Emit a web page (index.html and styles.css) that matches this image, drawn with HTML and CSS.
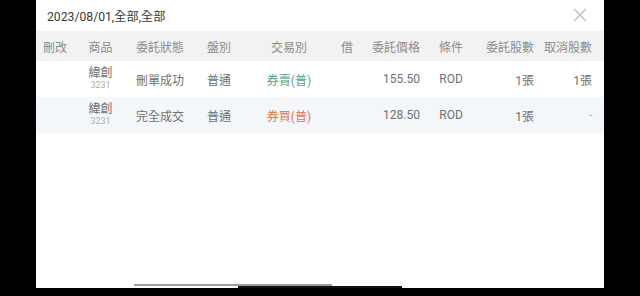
FILE: index.html
```html
<!DOCTYPE html>
<html lang="zh-Hant">
<head>
<meta charset="utf-8">
<link rel="stylesheet" href="styles.css">
</head>
<body>
<div class="panel">
  <div class="titlebar">
    <span class="title">2023/08/01,全部,全部</span>
    <svg class="close" width="14" height="14" viewBox="0 0 14 14"><path d="M1 1L13 13M13 1L1 13" stroke="#c4c4c4" stroke-width="1.6" fill="none"/></svg>
  </div>
  <div class="table">
    <div class="row head">
      <div class="c">刪改</div>
      <div class="c">商品</div>
      <div class="c">委託狀態</div>
      <div class="c">盤別</div>
      <div class="c">交易別</div>
      <div class="c">借</div>
      <div class="r">委託價格</div>
      <div class="c">條件</div>
      <div class="r">委託股數</div>
      <div class="r">取消股數</div>
    </div>
    <div class="row body">
      <div class="c"></div>
      <div class="c stock"><span class="name">緯創</span><span class="code">3231</span></div>
      <div class="c">刪單成功</div>
      <div class="c">普通</div>
      <div class="c sell">券賣(普)</div>
      <div class="c"></div>
      <div class="r">155.50</div>
      <div class="c">ROD</div>
      <div class="r">1張</div>
      <div class="r">1張</div>
    </div>
    <div class="row body alt">
      <div class="c"></div>
      <div class="c stock"><span class="name">緯創</span><span class="code">3231</span></div>
      <div class="c">完全成交</div>
      <div class="c">普通</div>
      <div class="c buy">券買(普)</div>
      <div class="c"></div>
      <div class="r">128.50</div>
      <div class="c">ROD</div>
      <div class="r">1張</div>
      <div class="r dash">-</div>
    </div>
  </div>
  <div class="scroll-thumb"></div>
  <div class="nav-bar"></div>
</div>
</body>
</html>
```

FILE: styles.css
```css
html, body {
  margin: 0;
  padding: 0;
  background: #000;
  width: 640px;
  height: 296px;
  overflow: hidden;
  font-family: "Roboto", "Noto Sans CJK TC", sans-serif;
}
.panel {
  position: relative;
  margin-left: 36px;
  width: 568px;
  height: 288px;
  background: #fff;
}
.titlebar {
  height: 31px;
  display: flex;
  align-items: center;
  justify-content: space-between;
  padding: 0 17px 0 11px;
}
.title {
  font-size: 12.2px;
  color: #3a3a3a;
  padding-top: 1px;
}
.close {
  display: block;
  margin-top: -2px;
}
.row {
  display: grid;
  grid-template-columns: 38px 53px 66px 52px 88px 28px 59px 62px 52px 58px;
  padding-right: 12px;
  align-items: center;
  font-size: 12px;
}
.head {
  height: 30px;
  background: #f2f2f2;
  color: #8c8c8c;
}
.body {
  height: 36px;
  color: #707070;
}
.alt {
  background: #f4f7f9;
}
.c { text-align: center; white-space: nowrap; }
.r { text-align: right; white-space: nowrap; }
.stock {
  display: flex;
  flex-direction: column;
  align-items: center;
  line-height: 13px;
}
.name { font-size: 12px; color: #707070; }
.code { font-size: 9px; color: #b0b0b0; line-height: 11px; }
.sell { color: #5c9f86; }
.buy { color: #e8733f; }
.dash { color: #b0b0b0; }
.scroll-thumb {
  position: absolute;
  left: 98px;
  width: 198px;
  top: 284px;
  height: 2px;
  background: #9e9e9e;
}
.nav-bar {
  position: absolute;
  left: 202px;
  width: 164px;
  top: 286px;
  height: 2px;
  background: #111;
}
```
